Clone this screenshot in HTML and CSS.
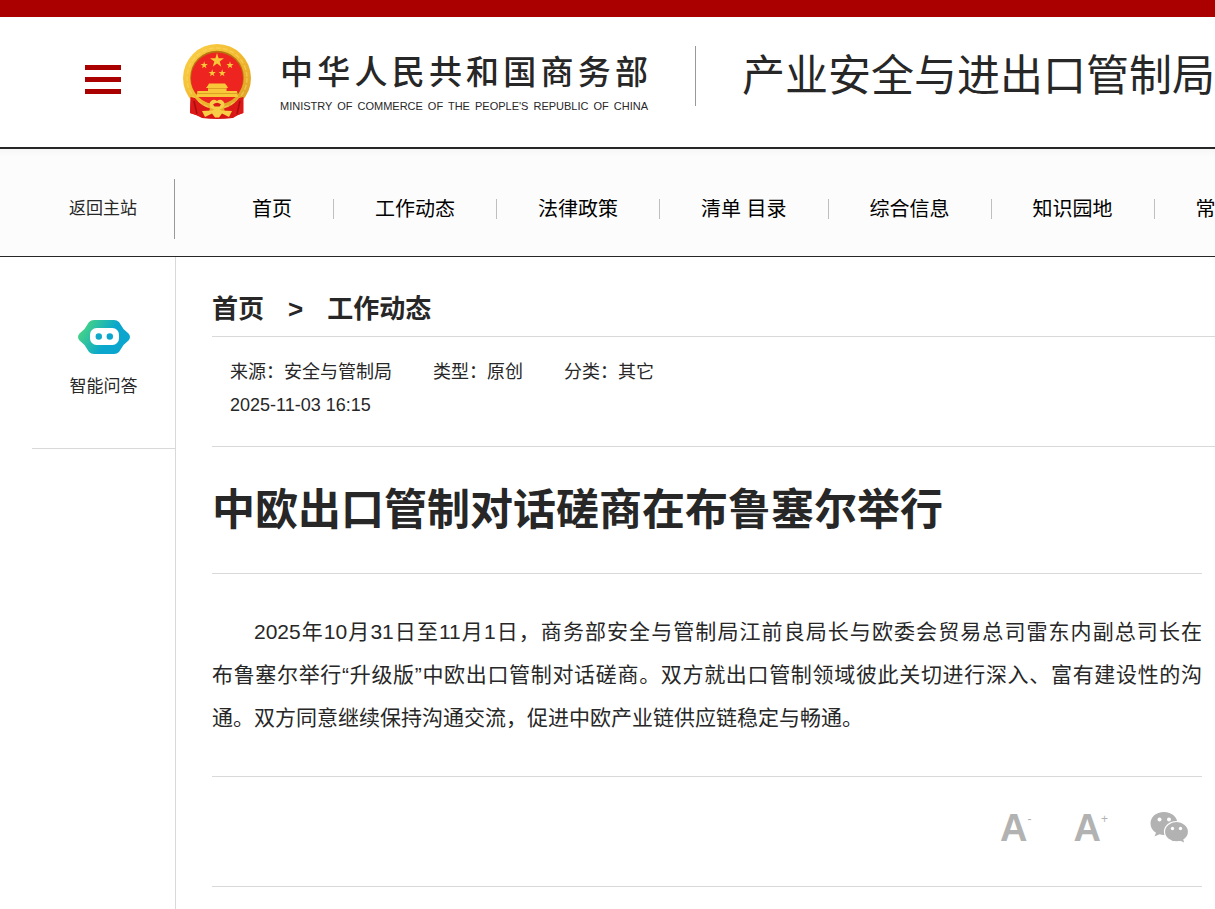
FILE: index.html
```html
<!DOCTYPE html>
<html lang="zh-CN">
<head>
  <meta charset="UTF-8">
  <title>中欧出口管制对话磋商在布鲁塞尔举行</title>
  <link rel="stylesheet" href="styles.css">
</head>
<body>

  <header class="header">
    <div class="menu-box">
      <button type="button" class="menu-btn" aria-label="菜单">
        <span></span>
        <span></span>
        <span></span>
      </button>
    </div>
    <a class="logo" href="#">
      <svg class="emblem" viewBox="0 0 70 75" aria-hidden="true">
        <defs>
          <linearGradient id="gold" x1="0" y1="0" x2="1" y2="1">
            <stop offset="0" stop-color="#fbd34a"/>
            <stop offset="0.5" stop-color="#f2b92f"/>
            <stop offset="1" stop-color="#d99a22"/>
          </linearGradient>
        </defs>
        <path d="M9 52 L8 69 L14 71 L20 74 Q35 76 51 74 L56 71 L61 69 L61 52 Z" fill="#d81414"/>
        <circle cx="35" cy="34" r="34" fill="url(#gold)"/>
        <circle cx="35" cy="34" r="30" fill="none" stroke="#fbdc6c" stroke-width="1.500" stroke-dasharray="5 2" opacity=".5"/>
        <circle cx="35" cy="33.500" r="26.800" fill="#b8740f"/>
        <circle cx="35" cy="34.500" r="26" fill="#ee2420"/>
        <g fill="#f9c838">
          <path id="star" d="M35 9 L36.600 14.300 L42 14.300 L37.700 17.600 L39.300 22.800 L35 19.600 L30.700 22.800 L32.300 17.600 L28 14.300 L33.400 14.300 Z"/>
          <use href="#star" transform="translate(4 12.500) scale(.52)"/>
          <use href="#star" transform="translate(29.800 12.500) scale(.52)"/>
          <use href="#star" transform="translate(12 20.500) scale(.52)"/>
          <use href="#star" transform="translate(22 20.500) scale(.52)"/>
          <path d="M25.500 42 L27 39.500 H43 L45 42 L46 44 H44.500 V47 H55 L56 53 H14 L15.500 47 H26 V44 H24 Z"/>
        </g>
        <path d="M26 44.500 H44 M15 49.500 H56" stroke="#d6961f" stroke-width=".8"/>
        <!-- ribbons and wheel -->
        <path d="M8.500 53 L13 54 Q19 62 28 64.500 L27 68 L20 69 L17 72 L8 69 Z" fill="#dc1917"/>
        <path d="M61.500 53 L57 54 Q51 62 42 64.500 L43 68 L50 69 L53 72 L61.500 69 Z" fill="#dc1917"/>
        <path d="M12 57 L15 70 M58 57 L55 70" stroke="#a80d0d" stroke-width="1.500"/>
        <path d="M29 64 Q26 60 29 57 Q32 54.500 35 57 Q38 54.500 41 57 Q44 60 41 64 L35 67 Z" fill="#f8cd48"/>
        <path d="M31 60.500 Q35 57 39 60.500 L37.500 62.500 H32.500 Z" fill="#dc1917"/>
        <path d="M20 67 L30 66.500 L35 64.500 L40 66.500 L50 67 L47 73 L40 69.500 L37 73.500 H33 L30 69.500 L23 73 Z" fill="#f7ce45"/>
      </svg>
      <span class="logo-text">
        <span class="logo-cn">中华人民共和国商务部</span>
        <span class="logo-en">MINISTRY OF COMMERCE OF THE PEOPLE'S REPUBLIC OF CHINA</span>
      </span>
    </a>
    <a class="bureau" href="#">产业安全与进出口管制局</a>
  </header>

  <nav class="nav">
    <div class="nav-side"><a class="back-link" href="#">返回主站</a></div>
    <ul class="nav-list">
      <li><a href="#">首页</a></li>
      <li><a href="#">工作动态</a></li>
      <li><a href="#">法律政策</a></li>
      <li><a href="#">清单 目录</a></li>
      <li><a href="#">综合信息</a></li>
      <li><a href="#">知识园地</a></li>
      <li><a href="#">常见问题</a></li>
    </ul>
  </nav>

  <div class="main">
    <aside class="side">
      <a class="robot" href="#">
        <svg class="robot-icon" viewBox="0 0 52 34" aria-hidden="true">
          <defs>
            <linearGradient id="robotFill" x1="0" y1="0" x2="1" y2="0.4">
              <stop offset="0.05" stop-color="#4fdb79"/>
              <stop offset="0.7" stop-color="#0aa6ce"/>
            </linearGradient>
          </defs>
          <path d="M16 0 H36 Q39 0 41 2 L45.500 9 L50.500 13.500 Q53.500 17 50.500 20.500 L45.500 25 L41 32 Q39 34 36 34 H16 Q13 34 11 32 L6.500 25 L1.500 20.500 Q-1.500 17 1.500 13.500 L6.500 9 L11 2 Q13 0 16 0 Z" fill="url(#robotFill)"/>
          <rect x="12" y="8" width="29" height="17" rx="6.500" fill="#fff"/>
          <circle cx="20.800" cy="16.500" r="3.200" fill="#10a9c9"/>
          <circle cx="31.800" cy="16.500" r="3.200" fill="#0aa6ce"/>
        </svg>
        <span>智能问答</span>
      </a>
    </aside>

    <main class="content">
      <div class="crumbs">
        <a href="#">首页</a>
        <span>&gt;</span>
        <a href="#">工作动态</a>
      </div>

      <div class="meta">
        <div class="meta-row">
          <span>来源：安全与管制局</span>
          <span>类型：原创</span>
          <span>分类：其它</span>
        </div>
        <time datetime="2025-11-03T16:15">2025-11-03 16:15</time>
      </div>

      <article class="article">
        <h1>中欧出口管制对话磋商在布鲁塞尔举行</h1>
        <p>
          <span class="full indent">2025年10月31日至11月1日，商务部安全与管制局江前良局长与欧委会贸易总司雷东内副总司长在</span>
          <span class="full">布鲁塞尔举行“升级版”中欧出口管制对话磋商。双方就出口管制领域彼此关切进行深入、富有建设性的沟</span>
          <span class="last">通。双方同意继续保持沟通交流，促进中欧产业链供应链稳定与畅通。</span>
        </p>
        <div class="tools">
          <button type="button" class="tool font-btn" aria-label="缩小字体"><b>A</b><sup>-</sup></button>
          <button type="button" class="tool font-btn" aria-label="放大字体"><b>A</b><sup>+</sup></button>
          <button type="button" class="tool" aria-label="微信">
            <svg class="wechat" viewBox="0 0 38 32" aria-hidden="true">
              <path d="M14 1 C6 1 .5 6 .5 12.500 C.5 16.500 2.500 19.500 6 21.700 L4.500 25.500 L9.500 23.300 C11 23.700 12.500 24 14.500 24 C22 24 27.500 19 27.500 12.500 C27.500 6 21.500 1 14 1 Z" fill="#b2b2b2"/>
              <ellipse cx="26.500" cy="20.700" rx="12" ry="10.200" fill="#b2b2b2" stroke="#fff" stroke-width="1.200"/>
              <path d="M29 29 L34 31.500 L33 27 Z" fill="#b2b2b2"/>
              <g fill="#fff">
                <circle cx="9.500" cy="8.500" r="2"/>
                <circle cx="19" cy="8.500" r="2"/>
                <circle cx="22.500" cy="17.500" r="1.700"/>
                <circle cx="30.500" cy="17.500" r="1.700"/>
              </g>
            </svg>
          </button>
        </div>
      </article>
    </main>
  </div>

</body>
</html>
```
FILE: styles.css
```css
* {
  box-sizing: border-box;
}

body {
  margin: 0;
  min-height: 100vh;
  display: flex;
  flex-direction: column;
  overflow-x: hidden;
  font-family: "Liberation Sans", "Noto Sans CJK SC", sans-serif;
  font-size: 18px;
  color: #272727;
  background-color: #fff;
  border-top: 17px solid #aa0000;
}

a {
  color: inherit;
  text-decoration: none;
}

button {
  border: 0;
  padding: 0;
  background: none;
  cursor: pointer;
}

/* header */
.header {
  display: flex;
  align-items: center;
  height: 132px;
  padding-bottom: 2px;
  border-bottom: 2px solid #272727;
  white-space: nowrap;
}

.menu-box {
  flex: 0 0 182px;
  padding: 0 0 4px 85px;
}

.menu-btn {
  display: flex;
  flex-direction: column;
  gap: 7px;
  width: 36px;
}

.menu-btn span {
  height: 5px;
  background-color: #aa0000;
}

.logo {
  display: flex;
  flex: none;
  align-items: center;
  gap: 28px;
}

.emblem {
  width: 70px;
  height: 75px;
}

.logo-text {
  display: flex;
  flex-direction: column;
  width: 368px;
  padding-top: 4px;
}

.logo-cn {
  font-size: 33px;
  font-weight: 500;
  line-height: 46px;
  text-align-last: justify;
}

.logo-en {
  font-size: 11px;
  line-height: 20px;
  text-align-last: justify;
}

.bureau {
  flex: none;
  margin: 0 0 10px 47px;
  padding-left: 46px;
  border-left: 1px solid #999;
  font-size: 43px;
  line-height: 60px;
}

/* navigation */
.nav {
  display: flex;
  align-items: center;
  height: 108px;
  padding-top: 13px;
  border-bottom: 1px solid #272727;
  background: linear-gradient(#f7f7f7, #fcfcfc 8px);
  white-space: nowrap;
}

.nav-side {
  flex: 0 0 175px;
  padding-left: 69px;
  border-right: 1px solid #999;
  font-size: 17px;
  line-height: 60px;
}

.nav-list {
  display: flex;
  flex: 1;
  margin: 0;
  padding: 0 0 0 36px;
  overflow: hidden;
  list-style: none;
  font-size: 20px;
  line-height: 20px;
  color: #000;
}

.nav-list li {
  flex: none;
  padding: 0 41px;
}

.nav-list li + li {
  border-left: 1px solid #bfbfbf;
}

/* page body */
.main {
  display: flex;
  flex: 1;
}

.side {
  flex: 0 0 176px;
  padding-left: 32px;
  border-right: 1px solid #d9d9d9;
}

.robot {
  display: flex;
  flex-direction: column;
  align-items: center;
  gap: 20px;
  height: 192px;
  padding-top: 63px;
  border-bottom: 1px solid #d9d9d9;
  font-size: 17px;
  line-height: 26px;
}

.robot-icon {
  width: 52px;
  height: 34px;
}

.content {
  flex: 1;
  min-width: 0;
  padding-left: 36px;
}

.crumbs {
  display: flex;
  gap: 24px;
  padding: 32px 0 7px;
  border-bottom: 1px solid #d9d9d9;
  font-size: 26px;
  font-weight: bold;
  line-height: 40px;
}

.meta {
  height: 110px;
  padding: 19px 18px;
  border-bottom: 1px solid #d9d9d9;
  line-height: 33px;
}

.meta-row {
  display: flex;
  gap: 41px;
}

.article {
  margin-right: 13px;
}

.article h1 {
  margin: 0;
  padding: 31px 0;
  border-bottom: 1px solid #d9d9d9;
  font-size: 43px;
  line-height: 64px;
}

.article p {
  margin: 0;
  padding: 36px 0 37px;
  border-bottom: 1px solid #d9d9d9;
  font-size: 21px;
  line-height: 43px;
}

.article p span {
  display: block;
}

.full {
  text-align: justify;
  text-align-last: justify;
}

.indent {
  padding-left: 2em;
}

.tools {
  display: flex;
  justify-content: flex-end;
  gap: 42px;
  height: 110px;
  padding: 32px 14px;
  border-bottom: 1px solid #d9d9d9;
}

.tool {
  display: flex;
  align-items: flex-start;
  height: 38px;
  color: #b2b2b2;
  font-family: inherit;
}

.font-btn b {
  font-size: 38px;
  line-height: 38px;
}

.font-btn sup {
  font-size: 12px;
  line-height: 20px;
}

.wechat {
  width: 38px;
  height: 32px;
  margin-top: 2px;
}
```
